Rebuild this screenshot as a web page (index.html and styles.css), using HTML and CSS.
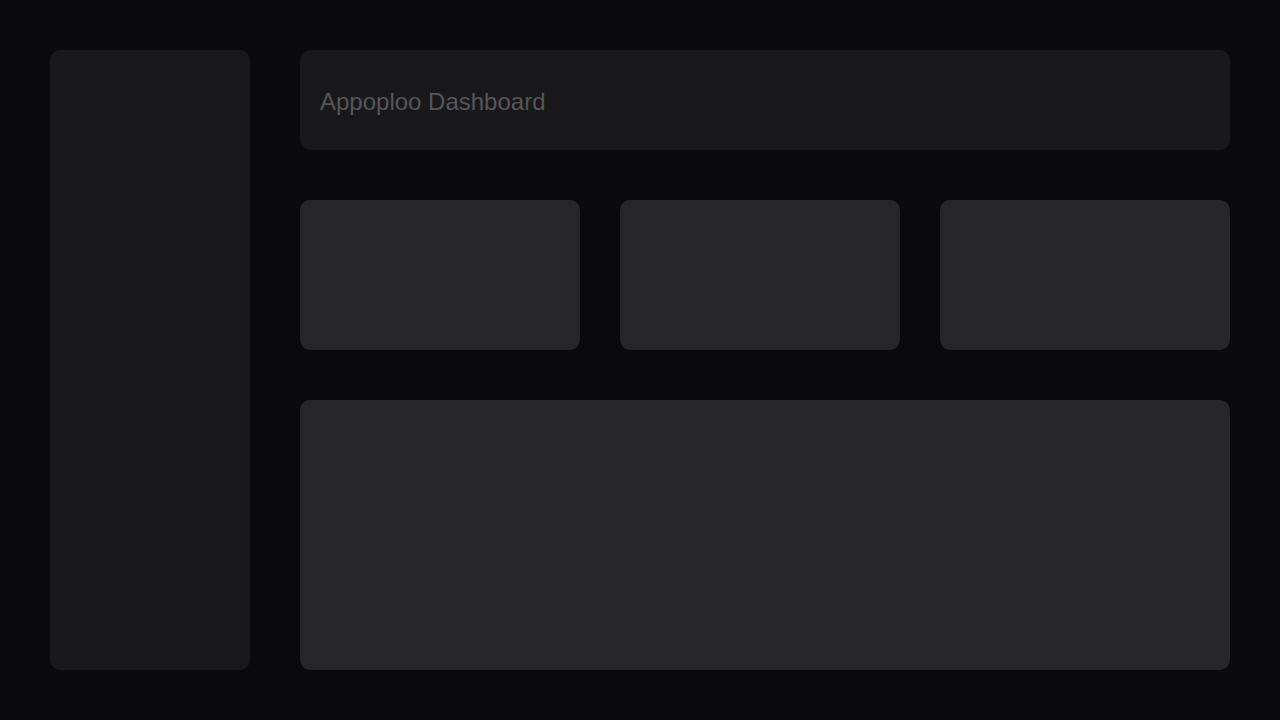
FILE: index.html
```html
<!DOCTYPE html>
<html lang="en">
<head>
<meta charset="utf-8">
<title>Appoploo Dashboard</title>
<link rel="stylesheet" href="styles.css">
</head>
<body>
<div class="layout">
  <aside class="sidebar"></aside>
  <main class="main">
    <header class="header"><h1 class="title">Appoploo Dashboard</h1></header>
    <section class="cards">
      <div class="card"></div>
      <div class="card"></div>
      <div class="card"></div>
    </section>
    <section class="panel"></section>
  </main>
</div>
</body>
</html>
```

FILE: styles.css
```css
html, body {
  margin: 0;
  height: 100%;
  background: #0a0a0c;
}
body {
  font-family: "Liberation Sans", Arial, sans-serif;
  box-sizing: border-box;
  padding: 50px;
}
.layout {
  display: grid;
  grid-template-columns: 200px 1fr;
  gap: 50px;
  height: 620px;
}
.sidebar {
  background: #18181a;
  border-radius: 10px;
}
.main {
  display: flex;
  flex-direction: column;
  gap: 50px;
}
.header {
  height: 100px;
  background: #18181a;
  border-radius: 10px;
  display: flex;
  align-items: center;
  padding: 0 20px;
  box-sizing: border-box;
}
.title {
  margin: 4px 0 0;
  font-size: 24px;
  font-weight: normal;
  color: #56555a;
}
.cards {
  display: grid;
  grid-template-columns: 280px 280px 1fr;
  gap: 40px;
  height: 150px;
}
.card {
  background: #262628;
  border-radius: 10px;
}
.panel {
  flex: 1;
  background: #262628;
  border-radius: 10px;
}
```
